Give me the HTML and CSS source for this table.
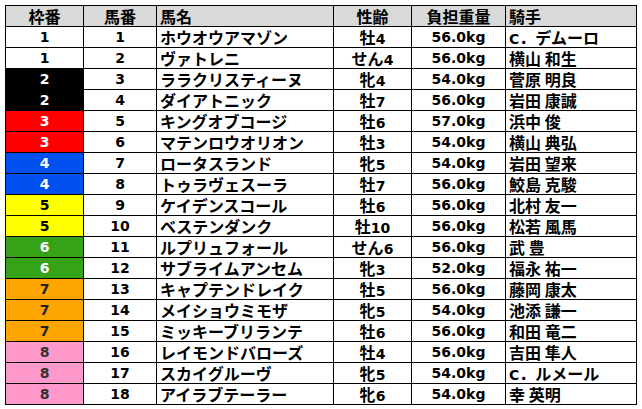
FILE: index.html
```html
<!DOCTYPE html>
<html lang="ja">
<head>
<meta charset="utf-8">
<title>出馬表</title>
<link rel="stylesheet" href="styles.css">
</head>
<body>
<div class="wrap">
<table class="race">
<colgroup>
<col class="c-waku"><col class="c-uma"><col class="c-name"><col class="c-age"><col class="c-wt"><col class="c-jockey">
</colgroup>
<thead>
<tr><th>枠番</th><th>馬番</th><th class="l">馬名</th><th>性齢</th><th>負担重量</th><th class="l">騎手</th></tr>
</thead>
<tbody>
<tr><td class="w w1 n">1</td><td class="n">1</td><td class="l">ホウオウアマゾン</td><td>牡<span class="n">4</span></td><td class="n">56.0kg</td><td class="l"><span class="n">C</span>．デムーロ</td></tr>
<tr><td class="w w1 n">1</td><td class="n">2</td><td class="l">ヴァトレニ</td><td>せん<span class="n">4</span></td><td class="n">56.0kg</td><td class="l">横山 和生</td></tr>
<tr><td class="w w2 n">2</td><td class="n">3</td><td class="l">ララクリスティーヌ</td><td>牝<span class="n">4</span></td><td class="n">54.0kg</td><td class="l">菅原 明良</td></tr>
<tr><td class="w w2 n">2</td><td class="n">4</td><td class="l">ダイアトニック</td><td>牡<span class="n">7</span></td><td class="n">56.0kg</td><td class="l">岩田 康誠</td></tr>
<tr><td class="w w3 n">3</td><td class="n">5</td><td class="l">キングオブコージ</td><td>牡<span class="n">6</span></td><td class="n">57.0kg</td><td class="l">浜中 俊</td></tr>
<tr><td class="w w3 n">3</td><td class="n">6</td><td class="l">マテンロウオリオン</td><td>牡<span class="n">3</span></td><td class="n">54.0kg</td><td class="l">横山 典弘</td></tr>
<tr><td class="w w4 n">4</td><td class="n">7</td><td class="l">ロータスランド</td><td>牝<span class="n">5</span></td><td class="n">54.0kg</td><td class="l">岩田 望来</td></tr>
<tr><td class="w w4 n">4</td><td class="n">8</td><td class="l">トゥラヴェスーラ</td><td>牡<span class="n">7</span></td><td class="n">56.0kg</td><td class="l">鮫島 克駿</td></tr>
<tr><td class="w w5 n">5</td><td class="n">9</td><td class="l">ケイデンスコール</td><td>牡<span class="n">6</span></td><td class="n">56.0kg</td><td class="l">北村 友一</td></tr>
<tr><td class="w w5 n">5</td><td class="n">10</td><td class="l">ベステンダンク</td><td>牡<span class="n">10</span></td><td class="n">56.0kg</td><td class="l">松若 風馬</td></tr>
<tr><td class="w w6 n">6</td><td class="n">11</td><td class="l">ルプリュフォール</td><td>せん<span class="n">6</span></td><td class="n">56.0kg</td><td class="l">武 豊</td></tr>
<tr><td class="w w6 n">6</td><td class="n">12</td><td class="l">サブライムアンセム</td><td>牝<span class="n">3</span></td><td class="n">52.0kg</td><td class="l">福永 祐一</td></tr>
<tr><td class="w w7 n">7</td><td class="n">13</td><td class="l">キャプテンドレイク</td><td>牡<span class="n">5</span></td><td class="n">56.0kg</td><td class="l">藤岡 康太</td></tr>
<tr><td class="w w7 n">7</td><td class="n">14</td><td class="l">メイショウミモザ</td><td>牝<span class="n">5</span></td><td class="n">54.0kg</td><td class="l">池添 謙一</td></tr>
<tr><td class="w w7 n">7</td><td class="n">15</td><td class="l">ミッキーブリランテ</td><td>牡<span class="n">6</span></td><td class="n">56.0kg</td><td class="l">和田 竜二</td></tr>
<tr><td class="w w8 n">8</td><td class="n">16</td><td class="l">レイモンドバローズ</td><td>牡<span class="n">4</span></td><td class="n">56.0kg</td><td class="l">吉田 隼人</td></tr>
<tr><td class="w w8 n">8</td><td class="n">17</td><td class="l">スカイグルーヴ</td><td>牝<span class="n">5</span></td><td class="n">54.0kg</td><td class="l"><span class="n">C</span>．ルメール</td></tr>
<tr><td class="w w8 n">8</td><td class="n">18</td><td class="l">アイラブテーラー</td><td>牝<span class="n">6</span></td><td class="n">54.0kg</td><td class="l">幸 英明</td></tr>
</tbody>
</table>
</div>
</body>
</html>
```

FILE: styles.css
```css
html, body {
  margin: 0;
  padding: 0;
  background: #ffffff;
}

.wrap {
  padding: 5px 0 0 5px;
}

.race {
  border-collapse: collapse;
  table-layout: fixed;
  width: 631px;
  font-family: "Noto Sans CJK JP", "DejaVu Sans", sans-serif;
  font-size: 16px;
  font-weight: bold;
  color: #000;
}

.c-waku { width: 78px; }
.c-uma { width: 73px; }
.c-name { width: 177px; }
.c-age { width: 78px; }
.c-wt { width: 94px; }
.c-jockey { width: 131px; }

.race th,
.race td {
  border: 1px solid #000;
  padding: 0;
  text-align: center;
  line-height: 20px;
  white-space: nowrap;
  overflow: hidden;
  vertical-align: middle;
}

.race thead th { height: 20px; }
.race tbody td { height: 20px; }

.race th {
  background: #d9d9d9;
  font-weight: bold;
}

.race .l {
  text-align: left;
  padding-left: 3px;
}

.n {
  font-family: "DejaVu Sans", "Noto Sans CJK JP", sans-serif;
  font-size: 14px;
  line-height: 14px;
}

td.n {
  line-height: 20px;
}

.w1 { background: #ffffff; color: #000; }
.w2 { background: #000000; color: #fff; }
.w3 { background: #ff0000; color: #fff; }
.w4 { background: #0050f0; color: #fff; }
.w5 { background: #ffff00; color: #000; }
.w6 { background: #36a218; color: #fff; }
.w7 { background: #ffa500; color: #222; }
.w8 { background: #ff99cc; color: #333; }
```
